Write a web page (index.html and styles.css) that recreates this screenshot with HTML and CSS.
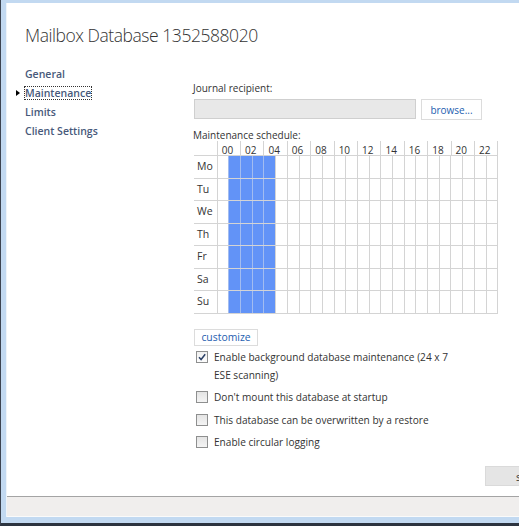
FILE: index.html
```html
<!DOCTYPE html>
<html>
<head>
<meta charset="utf-8">
<link rel="stylesheet" href="styles.css">
</head>
<body>
<div class="frame">
  <div class="window">
    <div class="main">
      <h1 class="title">Mailbox Database 1352588020</h1>
      <div class="body">
        <nav class="nav">
          <div class="nav-item">General</div>
          <div class="nav-item active"><span class="arrow"></span><span class="focus">Maintenance</span></div>
          <div class="nav-item">Limits</div>
          <div class="nav-item">Client Settings</div>
        </nav>
        <div class="content">
          <div class="label">Journal recipient:</div>
          <div class="recipient-row">
            <div class="input"></div>
            <button class="btn browse">browse...</button>
          </div>
          <div class="label sched-label">Maintenance schedule:</div>
          <div class="schedule" id="schedule"></div>
          <button class="btn customize">customize</button>
          <ul class="checks">
            <li><span class="cb checked"><svg viewBox="0 0 10 10" width="10" height="10"><path d="M2 5.2 L4.1 7.5 L8.2 2.3" fill="none" stroke="#2a3f66" stroke-width="1.5"/></svg></span><span class="cb-text">Enable background database maintenance (24 x 7<br>ESE scanning)</span></li>
            <li><span class="cb"></span><span class="cb-text">Don't mount this database at startup</span></li>
            <li><span class="cb"></span><span class="cb-text">This database can be overwritten by a restore</span></li>
            <li><span class="cb"></span><span class="cb-text">Enable circular logging</span></li>
          </ul>
        </div>
      </div>
      <div class="actions"><button class="save">save</button></div>
    </div>
    <div class="footer"></div>
  </div>
</div>
<script src="script.js"></script>
</body>
</html>
```
FILE: script.js
```js
(function () {
  var s = document.getElementById('schedule');
  var html = '<div class="hdr-row"><div class="day"></div>';
  for (var h = 0; h < 24; h += 2) {
    html += '<div class="hdr">' + (h < 10 ? '0' + h : h) + '</div>';
  }
  html += '</div>';
  var days = ['Mo', 'Tu', 'We', 'Th', 'Fr', 'Sa', 'Su'];
  for (var d = 0; d < days.length; d++) {
    html += '<div class="row"><div class="day">' + days[d] + '</div>';
    for (var c = 0; c < 24; c++) {
      html += '<div class="cell' + (c >= 1 && c <= 4 ? ' on' : '') + '"></div>';
    }
    html += '</div>';
  }
  s.innerHTML = html;
})();
```
FILE: styles.css
```css
* { box-sizing: border-box; }
html, body { margin: 0; padding: 0; }
body {
  font-family: "Open Sans", "Noto Sans", sans-serif;
  color: #333;
  background: #c7dcf2;
}
.frame {
  width: 519px;
  height: 526px;
  background: #c2d9f1;
  border-left: 1px solid #3c4350;
  border-bottom: 3px solid #2c3440;
  padding: 3px 0 6px 5px;
  overflow: hidden;
}
.window {
  height: 100%;
  display: flex;
  flex-direction: column;
  background: #fff;
  border-left: 1px solid #eef4fa;
}
.main {
  flex: 1;
  position: relative;
  border-bottom: 1px solid #a4a4a4;
  padding-left: 18px;
}
.footer {
  height: 20px;
  background: #f0eeed;
  border-bottom: 1px solid #fafafa;
}
.title {
  margin: 0;
  padding-top: 18px;
  font-size: 17.5px;
  font-weight: 300;
  line-height: 28px;
  color: #333;
  letter-spacing: -0.45px;
}
.body {
  display: flex;
  margin-top: 16px;
}
.nav {
  width: 168px;
  flex: none;
}
.nav-item {
  position: relative;
  font-size: 10.5px;
  font-weight: 600;
  line-height: 19px;
  color: #47597a;
}
.nav-item .focus {
  outline: 1px dotted #333;
  outline-offset: -1px;
  padding: 0 1px 0 1px;
  margin-left: -1px;
}
.arrow {
  position: absolute;
  left: -9px;
  top: 6px;
  width: 0;
  height: 0;
  border-top: 3.5px solid transparent;
  border-bottom: 3.5px solid transparent;
  border-left: 4px solid #000;
}
.content {
  padding-top: 16px;
  width: 310px;
}
.label {
  font-size: 10px;
  line-height: 14px;
  color: #333;
}
.recipient-row {
  display: flex;
  gap: 5px;
  margin-top: 4px;
  margin-left: 1px;
}
.input {
  width: 222px;
  height: 20px;
  background: #e8e8e8;
  border: 1px solid #cfcfcf;
}
.btn {
  font-family: inherit;
  font-size: 10px;
  color: #2560b0;
  background: #fff;
  border: 1px solid #dcdcdc;
  padding: 0;
  text-align: center;
  cursor: pointer;
}
.browse {
  width: 61px;
  height: 21px;
  line-height: 18px;
}
.sched-label {
  margin-top: 9px;
  line-height: 12px;
}
.schedule {
  margin-left: 1px;
  width: 304px;
  font-size: 10px;
  color: #333;
}
.hdr-row, .row {
  display: grid;
  grid-template-columns: 22.7px repeat(24, 11.7px);
}
.hdr-row {
  grid-template-columns: 22.7px repeat(12, 23.4px);
  height: 14px;
  border-right: 1px solid #d4d4d4;
}
.hdr {
  border-left: 1px solid #d4d4d4;
  line-height: 11px;
  padding-top: 4px;
  padding-left: 4px;
}
.row {
  height: 22.57px;
  border-top: 1px solid #d4d4d4;
  border-right: 1px solid #d4d4d4;
}
.row:last-child { border-bottom: 1px solid #d4d4d4; height: 23.57px; }
.row .day {
  padding-left: 3px;
  line-height: 21px;
  font-size: 10.5px;
}
.cell {
  border-left: 1px solid #d4d4d4;
}
.cell.on {
  background: #6293f7;
  border-left-color: #a2bcf0;
}
.customize {
  display: block;
  margin-top: 15px;
  margin-left: 1px;
  width: 64px;
  height: 17px;
  line-height: 14px;
  font-size: 10.4px;
}
.checks {
  list-style: none;
  margin: 2px 0 0 3px;
  padding: 0;
  font-size: 10.1px;
  line-height: 18px;
}
.checks li {
  display: flex;
  align-items: flex-start;
  margin-bottom: 4.5px;
}
.cb {
  flex: none;
  width: 12px;
  height: 12px;
  margin-top: 3px;
  margin-right: 6px;
  border: 1px solid #8e8f8f;
  background: linear-gradient(#e4e4e4, #f4f4f4);
  display: flex;
  align-items: center;
  justify-content: center;
}
.cb.checked { background: linear-gradient(#f0f0f0, #fdfdfd); }
.cb-text { width: 290px; white-space: nowrap; }
.actions {
  position: absolute;
  right: 0;
  bottom: 10px;
}
.save {
  display: block;
  width: 34px;
  height: 20px;
  background: #e5e5e5;
  border: 1px solid #dadada;
  border-right: none;
  font-family: inherit;
  font-size: 11px;
  color: #333;
  padding: 0 0 0 30px;
  text-align: left;
  overflow: hidden;
  white-space: nowrap;
}
```
